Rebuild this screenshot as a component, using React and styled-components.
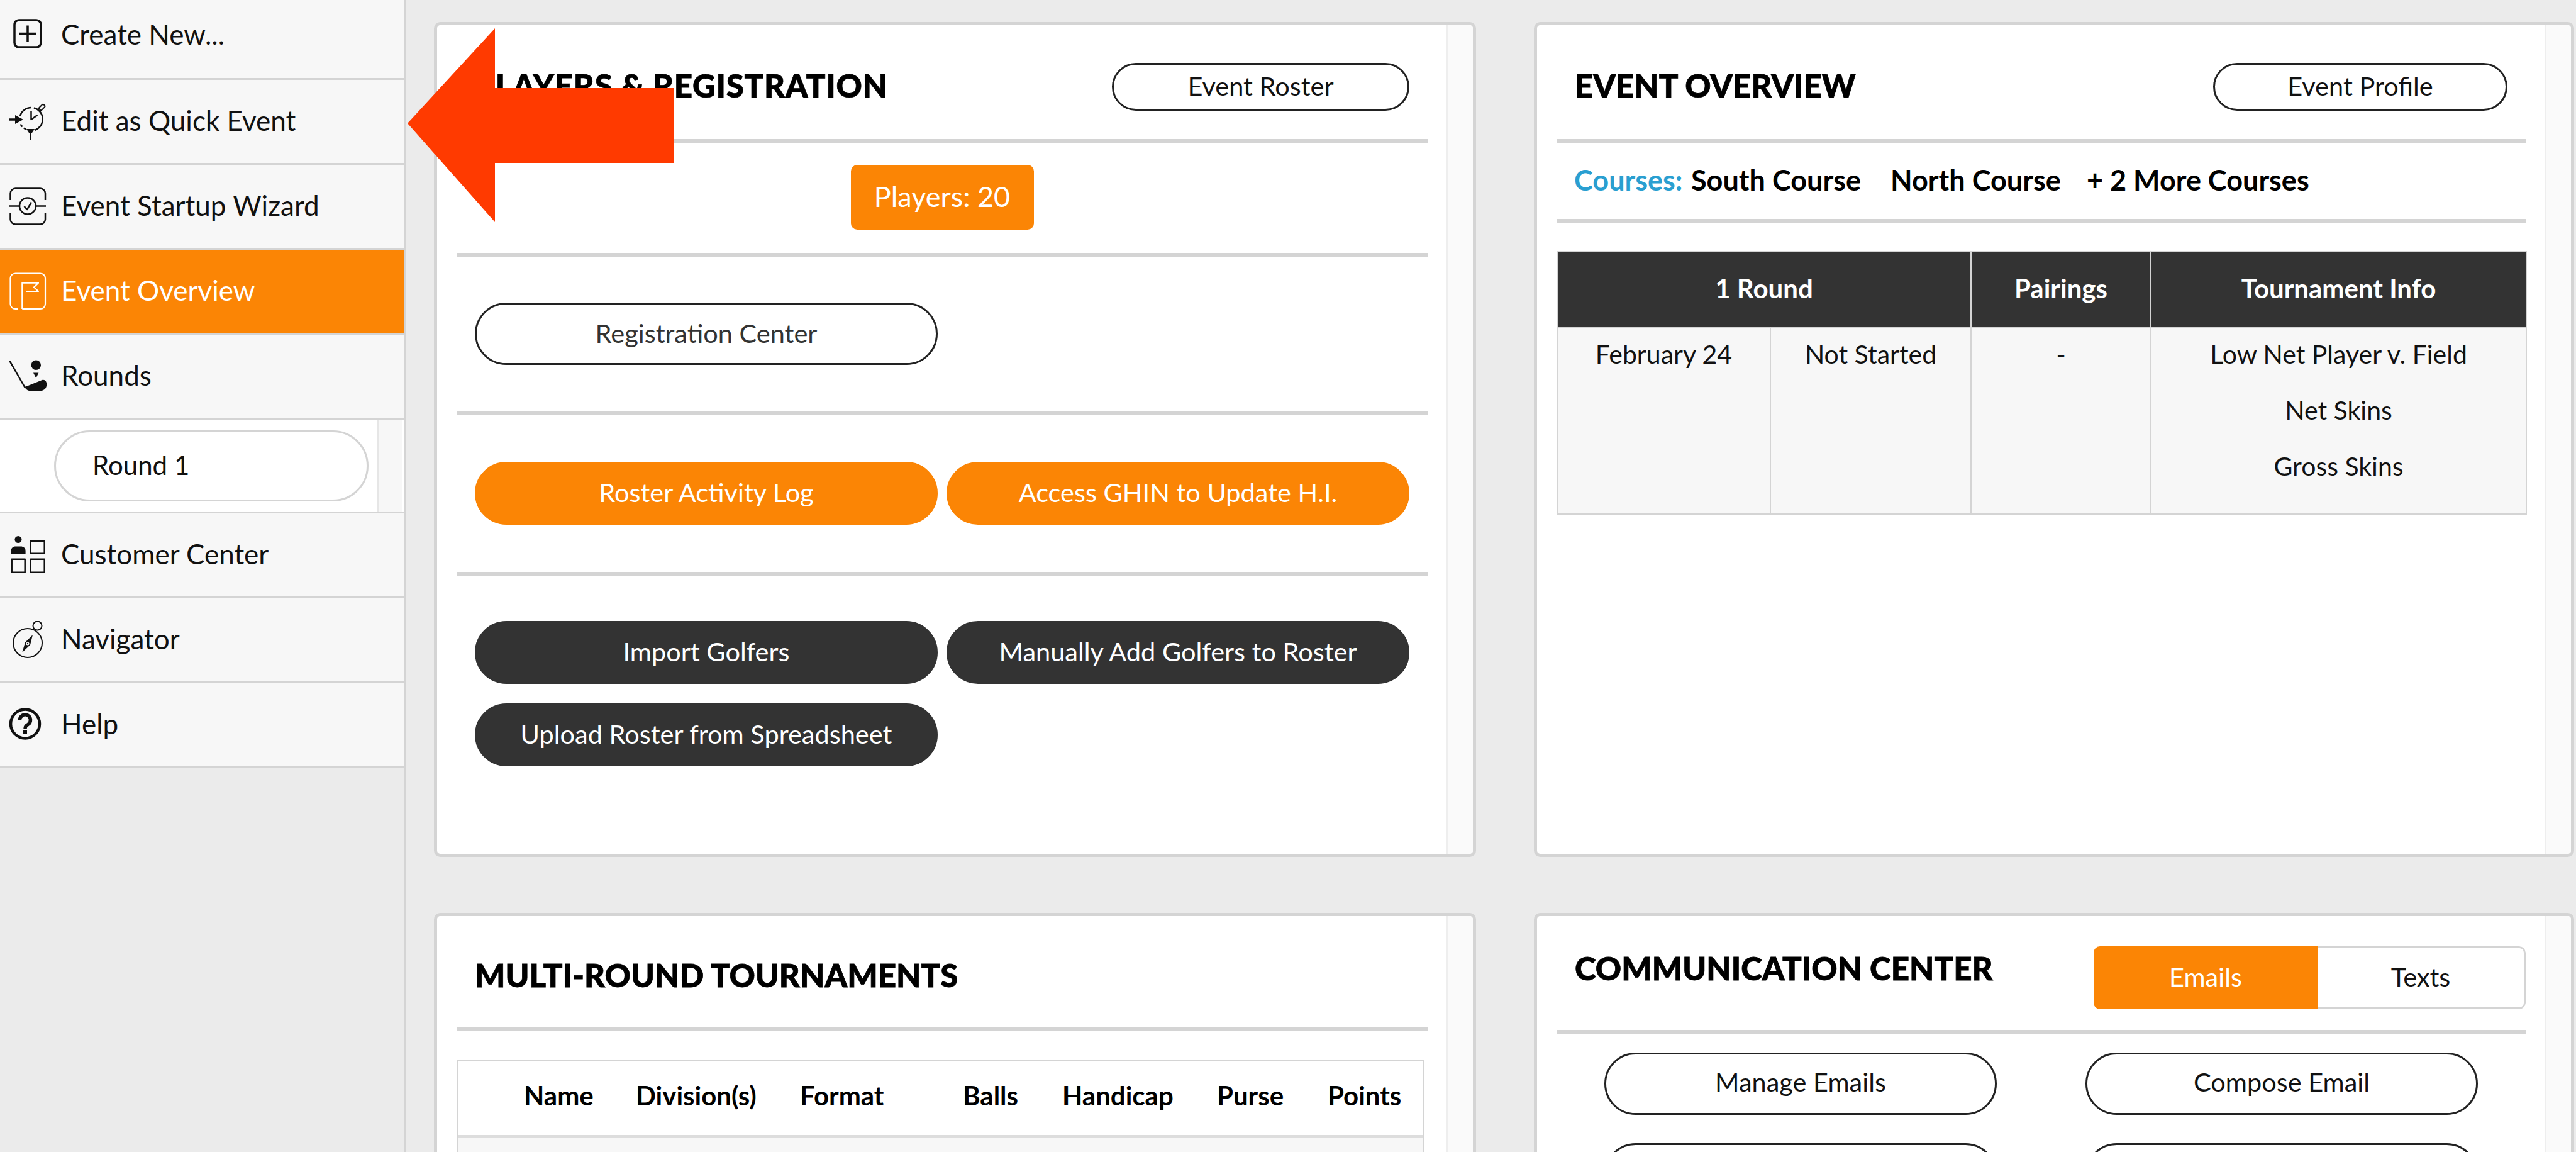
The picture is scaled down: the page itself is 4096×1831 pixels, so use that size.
import React from 'react';
import styled, { createGlobalStyle } from 'styled-components';

const GlobalStyle = createGlobalStyle`
  html, body {
    margin: 0;
    padding: 0;
    width: 4096px;
    height: 1831px;
    overflow: hidden;
    background: #ebebeb;
    font-family: Lato, "Liberation Sans", sans-serif;
  }
  * {
    box-sizing: border-box;
  }
`;

const ORANGE = '#fb8505';
const LINE = '#d4d4d4';
const DARK = '#333333';

const Page = styled.div`
  position: relative;
  display: flex;
  width: 4096px;
  height: 1831px;
  overflow: hidden;
`;

const Sidebar = styled.nav`
  flex: none;
  width: 646px;
  height: calc(100% + 8px);
  margin-top: -8px;
  border-right: 3px solid ${LINE};
`;

const NavRow = styled.div`
  display: flex;
  align-items: center;
  gap: 22px;
  height: 135px;
  padding-left: 15px;
  background: ${(p) => (p.$active ? ORANGE : '#f7f7f7')};
  color: ${(p) => (p.$active ? '#ffffff' : '#111111')};
  border-bottom: 3px solid ${LINE};
  font-size: 44px;

  &:first-child {
    padding-bottom: 5px;
  }
`;

const NavLabel = styled.span`
  margin-bottom: 4px;
`;

const SubRow = styled.div`
  display: flex;
  align-items: center;
  height: 149px;
  padding-left: 86px;
  background: #ffffff;
  border-bottom: 3px solid ${LINE};
`;

const RoundPill = styled.div`
  display: flex;
  align-items: center;
  width: 500px;
  height: 113px;
  padding: 0 0 3px 58px;
  border: 3px solid ${LINE};
  border-radius: 57px;
  color: #111111;
  font-size: 42px;
`;

const SubTrack = styled.div`
  align-self: stretch;
  width: 40px;
  margin-left: 14px;
  background: #f7f7f7;
  border-left: 2px solid #e6e6e6;
`;

const Main = styled.main`
  flex: 1;
  display: grid;
  grid-template-columns: 1657px 1654px;
  grid-template-rows: 1327px 1000px;
  column-gap: 92px;
  row-gap: 89px;
  padding: 35px 0 0 44px;
`;

const Card = styled.section`
  display: flex;
  overflow: hidden;
  background: #ffffff;
  border: 5px solid ${LINE};
  border-radius: 10px;
`;

const CardBody = styled.div`
  flex: 1;
  min-width: 0;
  padding: 0 30px 0 31px;
`;

const CardTrack = styled.div`
  flex: none;
  width: 42px;
  background: #fafafa;
  border-left: 2px solid #eeeeee;
`;

const CardHeader = styled.header`
  display: flex;
  align-items: center;
  justify-content: space-between;
  height: ${(p) => p.$h || 181}px;
  padding: 14px 29px 0;
`;

const Title = styled.h2`
  margin: 0 0 ${(p) => (p.$lift ? '31px' : '5px')};
  color: #000000;
  font-size: 51px;
  font-weight: 900;
  letter-spacing: ${(p) => p.$spacing || 0}px;
  white-space: nowrap;
  -webkit-text-stroke: 0.8px #000000;
`;

const Divider = styled.hr`
  height: 6px;
  margin: 0;
  border: 0;
  background: ${LINE};
`;

const Section = styled.div`
  padding: ${(p) => p.$top}px 29px ${(p) => p.$bottom}px;
`;

const Centered = styled(Section)`
  display: flex;
  justify-content: center;
`;

const ButtonGrid = styled.div`
  display: grid;
  grid-template-columns: 736px 736px;
  column-gap: 14px;
  row-gap: 31px;
`;

const Pill = styled.button`
  display: flex;
  align-items: center;
  justify-content: center;
  height: ${(p) => p.$h || 100}px;
  width: ${(p) => (p.$w ? `${p.$w}px` : '100%')};
  padding: 0 0 ${(p) => p.$lift || 4}px;
  font-family: inherit;
  font-size: 41.5px;
  border-radius: 50px;
  border: 3px solid ${(p) => (p.$fill ? p.$fill : '#222222')};
  background: ${(p) => p.$fill || '#ffffff'};
  color: ${(p) => (p.$fill ? '#ffffff' : p.$text || '#111111')};
`;

const PlayersBadge = styled.div`
  display: flex;
  align-items: center;
  justify-content: center;
  width: 291px;
  height: 103px;
  padding-bottom: 3px;
  border-radius: 10px;
  background: ${ORANGE};
  color: #ffffff;
  font-size: 45px;
`;

const CourseRow = styled.div`
  display: flex;
  align-items: center;
  height: 121px;
  padding: 0 0 3px 28px;
  color: #000000;
  font-size: 45px;
  font-weight: 700;
`;

const CourseLabel = styled.span`
  width: 186px;
  color: #2a9fd1;
`;

const CourseName = styled.span`
  width: ${(p) => p.$w}px;
  white-space: nowrap;
`;

const OverviewTable = styled.table`
  width: 100%;
  margin-top: 45px;
  table-layout: fixed;
  border-collapse: collapse;
  font-size: 41px;
  color: #111111;
  text-align: center;
`;

const HeadCell = styled.th`
  height: 120px;
  padding-bottom: 5px;
  background: ${DARK};
  color: #ffffff;
  font-size: 42px;
  font-weight: 700;
  border: 2px solid ${LINE};
`;

const BodyCell = styled.td`
  height: 297px;
  padding-top: 17px;
  vertical-align: top;
  background: #f7f7f7;
  border: 2px solid ${LINE};
`;

const InfoLine = styled.div`
  height: 89px;
`;

const RosterTable = styled.div`
  width: 1539px;
  margin-top: 45px;
  border: 2px solid ${LINE};
`;

const RosterHead = styled.div`
  display: grid;
  grid-template-columns: 105px 178px 261px 259px 158px 246px 176px 1fr;
  align-items: center;
  height: 123px;
  padding-bottom: 8px;
  border-bottom: 5px solid #dddddd;
  color: #000000;
  font-size: 42px;
  font-weight: 700;
`;

const RosterRow = styled.div`
  height: 200px;
  background: #f7f7f7;
`;

const Toggle = styled.div`
  display: flex;
  width: 687px;
  height: 100px;
  margin-right: -29px;
  overflow: hidden;
  border-radius: 10px;
  font-size: 41.5px;
`;

const ToggleOption = styled.div`
  display: flex;
  align-items: center;
  justify-content: center;
  flex: ${(p) => (p.$on ? '0 0 356px' : '1')};
  padding-bottom: 4px;
  background: ${(p) => (p.$on ? ORANGE : '#ffffff')};
  color: ${(p) => (p.$on ? '#ffffff' : '#111111')};
  border: ${(p) => (p.$on ? '0' : `3px solid ${LINE}`)};
  border-left: 0;
  border-radius: ${(p) => (p.$on ? '0' : '0 10px 10px 0')};
`;

const EmailGrid = styled.div`
  display: grid;
  grid-template-columns: 624px 624px;
  column-gap: 141px;
  row-gap: 45px;
  padding: 30px 0 0 76px;
`;

const Arrow = styled.svg`
  position: absolute;
  left: 648px;
  top: 45px;
  width: 424px;
  height: 308px;
`;

const IconSvg = styled.svg`
  flex: none;
  width: 60px;
  height: 60px;
  fill: none;
  stroke: currentColor;
  stroke-linecap: butt;
  stroke-linejoin: round;
`;

const CreateIcon = () => (
  <IconSvg viewBox="0 0 60 60" strokeWidth="3.5">
    <rect x="8" y="6" width="42" height="43" rx="7" />
    <path d="M29 14.5V40.5M16 27.5H42" />
  </IconSvg>
);

const QuickIcon = () => (
  <IconSvg viewBox="0 0 60 60" strokeWidth="2.5">
    <path d="M39 8.5A18.5 18.5 0 0 1 40 44" />
    <path d="M34.5 8A18.5 18.5 0 0 0 17 21" />
    <path d="M17.5 34.5l3 4M23 40.5l3.5 2.5M29 44.5h1" />
    <path d="M34.5 14V27L44.5 20" />
    <rect x="49" y="2.5" width="5.5" height="10" rx="2" transform="rotate(45 51.7 7.5)" strokeWidth="2" />
    <path d="M0 27H12" strokeWidth="3.5" />
    <path d="M9 20L22 27L9 34Z" fill="currentColor" stroke="none" />
    <path d="M27 42H40L36 48H31Z" fill="currentColor" stroke="none" />
    <path d="M33.5 46V59" strokeWidth="2.5" />
  </IconSvg>
);

const WizardIcon = () => (
  <IconSvg viewBox="0 0 60 60" strokeWidth="2.5">
    <path d="M1.5 20V9.500a8 8 0 0 1 8-8H49a8 8 0 0 1 8 8V20" />
    <path d="M1.5 40V50.500a8 8 0 0 0 8 8H49a8 8 0 0 0 8-8V40" />
    <circle cx="29" cy="29.5" r="13" />
    <path d="M0 29.5H16M42 29.5H58" />
    <path d="M23.5 30L28 35L35 23.5" />
  </IconSvg>
);

const OverviewIcon = () => (
  <IconSvg viewBox="0 0 60 60" strokeWidth="2.2">
    <path d="M20.3 58H49a8 8 0 0 0 8-8V9.500a8 8 0 0 0-8-8H9.500a8 8 0 0 0-8 8V50a8 8 0 0 0 8 8H13" />
    <path d="M20.3 58V16.6H46L39 23.5L46 30H27" />
  </IconSvg>
);

const RoundsIcon = () => (
  <IconSvg viewBox="0 0 60 60" strokeWidth="2.5">
    <path d="M0.5 5.8L24.7 48" />
    <circle cx="42.3" cy="12.2" r="7.7" fill="currentColor" stroke="none" />
    <path d="M38 24.5H46.4L42.3 33Z" fill="currentColor" stroke="none" />
    <path d="M24 47L29.8 45L52 36C56 34.5 59.500 38 59.2 43C59 48 57 51 53 52.500C49 54 38 54 31 53C28 52.500 26 50 24 47Z" fill="currentColor" stroke="none" />
  </IconSvg>
);

const CustomerIcon = () => (
  <IconSvg viewBox="0 0 60 60" strokeWidth="2.5">
    <circle cx="14" cy="5.5" r="5.5" fill="currentColor" stroke="none" />
    <path d="M2.600 28V23C2.600 19 6 16.400 10 16.400H18C22 16.400 25.600 19 25.600 23V28Z" fill="currentColor" stroke="none" />
    <rect x="33.700" y="7.800" width="22" height="20" />
    <rect x="3.700" y="36.800" width="21" height="21" />
    <rect x="33.700" y="36.800" width="22" height="21" />
  </IconSvg>
);

const NavigatorIcon = () => (
  <IconSvg viewBox="0 0 60 60" strokeWidth="2">
    <circle cx="29" cy="35" r="23" />
    <circle cx="44.5" cy="7.5" r="7" />
    <path d="M37 22L33 38L20.3 50L25 34Z" fill="currentColor" stroke="none" />
    <circle cx="29" cy="36" r="2.5" fill="#f7f7f7" stroke="none" />
    <circle cx="29" cy="36" r="1.2" fill="currentColor" stroke="none" />
  </IconSvg>
);

const HelpIcon = () => (
  <IconSvg viewBox="0 0 60 60" strokeWidth="4.5">
    <circle cx="25" cy="28.5" r="23" />
    <path d="M16.5 22.5a8.5 8.500 0 1 1 13 7c-3 2-4.500 3-4.500 7" strokeWidth="5.5" />
    <rect x="22" y="39" width="6" height="5.500" fill="currentColor" stroke="none" />
  </IconSvg>
);

const NAV_TOP = [
  ['Create New...', CreateIcon],
  ['Edit as Quick Event', QuickIcon],
  ['Event Startup Wizard', WizardIcon],
  ['Event Overview', OverviewIcon, true],
  ['Rounds', RoundsIcon],
];

const NAV_BOTTOM = [
  ['Customer Center', CustomerIcon],
  ['Navigator', NavigatorIcon],
  ['Help', HelpIcon],
];

const renderNav = ([label, Icon, active]) => (
  <NavRow key={label} $active={active}>
    <Icon />
    <NavLabel>{label}</NavLabel>
  </NavRow>
);

const ROSTER_COLS = ['', 'Name', 'Division(s)', 'Format', 'Balls', 'Handicap', 'Purse', 'Points'];

export default function App() {
  return (
    <Page>
      <GlobalStyle />
      <Sidebar>
        {NAV_TOP.map(renderNav)}
        <SubRow>
          <RoundPill>Round 1</RoundPill>
          <SubTrack />
        </SubRow>
        {NAV_BOTTOM.map(renderNav)}
      </Sidebar>

      <Main>
        <Card>
          <CardBody>
            <CardHeader>
              <Title $spacing={0.7}>PLAYERS &amp; REGISTRATION</Title>
              <Pill $w={473} $h={76}>Event Roster</Pill>
            </CardHeader>
            <Divider />
            <Centered $top={35} $bottom={37}>
              <PlayersBadge>Players: 20</PlayersBadge>
            </Centered>
            <Divider />
            <Section $top={73} $bottom={73}>
              <Pill $w={736} $h={99} $text={DARK}>Registration Center</Pill>
            </Section>
            <Divider />
            <Section $top={75} $bottom={75}>
              <ButtonGrid>
                <Pill $fill={ORANGE}>Roster Activity Log</Pill>
                <Pill $fill={ORANGE}>Access GHIN to Update H.I.</Pill>
              </ButtonGrid>
            </Section>
            <Divider />
            <Section $top={72} $bottom={0}>
              <ButtonGrid>
                <Pill $fill={DARK}>Import Golfers</Pill>
                <Pill $fill={DARK}>Manually Add Golfers to Roster</Pill>
                <Pill $fill={DARK}>Upload Roster from Spreadsheet</Pill>
              </ButtonGrid>
            </Section>
          </CardBody>
          <CardTrack />
        </Card>

        <Card>
          <CardBody>
            <CardHeader>
              <Title>EVENT OVERVIEW</Title>
              <Pill $w={468} $h={76}>Event Profile</Pill>
            </CardHeader>
            <Divider />
            <CourseRow>
              <CourseLabel>Courses:</CourseLabel>
              <CourseName $w={317}>South Course</CourseName>
              <CourseName $w={312}>North Course</CourseName>
              <CourseName>+ 2 More Courses</CourseName>
            </CourseRow>
            <Divider />
            <OverviewTable>
              <colgroup>
                <col width="339" />
                <col width="319" />
                <col width="286" />
                <col width="597" />
              </colgroup>
              <thead>
                <tr>
                  <HeadCell colSpan={2}>1 Round</HeadCell>
                  <HeadCell>Pairings</HeadCell>
                  <HeadCell>Tournament Info</HeadCell>
                </tr>
              </thead>
              <tbody>
                <tr>
                  <BodyCell>February 24</BodyCell>
                  <BodyCell>Not Started</BodyCell>
                  <BodyCell>-</BodyCell>
                  <BodyCell>
                    <InfoLine>Low Net Player v. Field</InfoLine>
                    <InfoLine>Net Skins</InfoLine>
                    <InfoLine>Gross Skins</InfoLine>
                  </BodyCell>
                </tr>
              </tbody>
            </OverviewTable>
          </CardBody>
          <CardTrack />
        </Card>

        <Card>
          <CardBody>
            <CardHeader $h={177}>
              <Title>MULTI-ROUND TOURNAMENTS</Title>
            </CardHeader>
            <Divider />
            <RosterTable>
              <RosterHead>
                {ROSTER_COLS.map((col) => (
                  <span key={col}>{col}</span>
                ))}
              </RosterHead>
              <RosterRow />
            </RosterTable>
          </CardBody>
          <CardTrack />
        </Card>

        <Card>
          <CardBody>
            <CardHeader>
              <Title $lift>COMMUNICATION CENTER</Title>
              <Toggle>
                <ToggleOption $on>Emails</ToggleOption>
                <ToggleOption>Texts</ToggleOption>
              </Toggle>
            </CardHeader>
            <Divider />
            <EmailGrid>
              <Pill $h={99} $lift={7}>Manage Emails</Pill>
              <Pill $h={99} $lift={7}>Compose Email</Pill>
              <Pill $h={99} />
              <Pill $h={99} />
            </EmailGrid>
          </CardBody>
          <CardTrack />
        </Card>
      </Main>

      <Arrow viewBox="0 0 424 308">
        <path d="M0 151L139 0V95H424V214H139V308Z" fill="#ff3a00" />
      </Arrow>
    </Page>
  );
}
